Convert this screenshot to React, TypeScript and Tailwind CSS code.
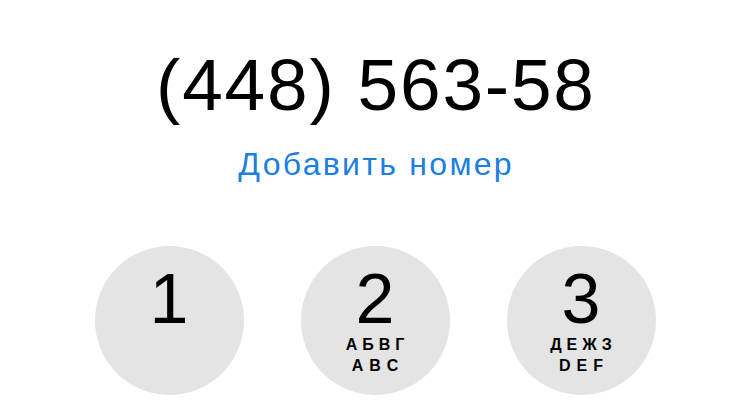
import React from "react";

const keys = [
  { d: "1", l1: "", l2: "" },
  { d: "2", l1: "АБВГ", l2: "ABC" },
  { d: "3", l1: "ДЕЖЗ", l2: "DEF" },
];

export default function App() {
  return (
    <div
      className="w-[750px] h-[410px] overflow-hidden bg-white flex flex-col items-center text-black"
      style={{ fontFamily: '"Liberation Sans", Arial, sans-serif' }}
    >
      <div className="mt-[48px] text-[73px] leading-none tracking-[1.8px] pl-[1.8px]">
        (448) 563-58
      </div>
      <div className="mt-[27px] text-[32px] leading-none text-[#1a7fe0] tracking-[2.3px] pl-[2.3px]">
        Добавить номер
      </div>
      <div className="mt-[66px] flex gap-[57px]">
        {keys.map((k) => (
          <div
            key={k.d}
            className="w-[149px] h-[149px] rounded-full bg-[#e4e4e4] flex flex-col items-center pt-[18px]"
          >
            <div className="text-[70px] leading-none">{k.d}</div>
            {k.l1 && (
              <div className="flex flex-col items-center text-[16px] leading-[21px] font-bold">
                <div className="tracking-[5px] pl-[5px]">{k.l1}</div>
                <div className="tracking-[6px] pl-[6px]">{k.l2}</div>
              </div>
            )}
          </div>
        ))}
      </div>
    </div>
  );
}
